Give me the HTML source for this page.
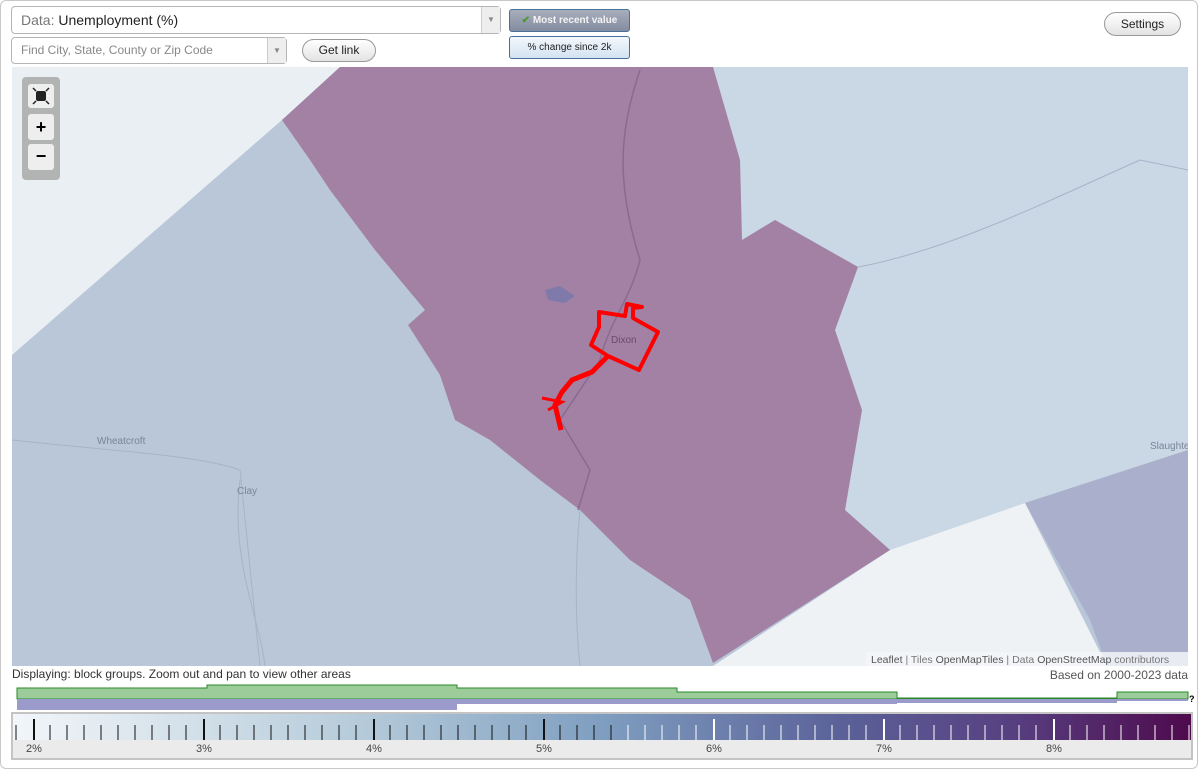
<!DOCTYPE html>
<html><head><meta charset="utf-8"><style>
body{margin:0;width:1200px;height:771px;background:#fff;font-family:"Liberation Sans",sans-serif;position:relative;overflow:hidden}
.frame{position:absolute;left:0;top:0;width:1196px;height:767px;border:1px solid #c8c8c8;border-radius:6px}
.sel{position:absolute;background:#fff;border:1px solid #b5b5b5;border-radius:4px;font-size:14px;color:#222}
.sel .arr{position:absolute;right:0;top:0;bottom:0;width:18px;border-left:1px solid #ccc;background:#eee;color:#888;font-size:8px;text-align:center}
.btn{position:absolute;border:1px solid #999;border-radius:12px;background:linear-gradient(#fff,#e3e3e3);font-size:12px;text-align:center;color:#222}
.tog{position:absolute;border:1px solid #4a6f9c;border-radius:3px;font-size:10px;text-align:center}
</style></head><body>
<div class="frame"></div>
<div class="sel" style="left:11px;top:6px;width:488px;height:26px;line-height:26px"><span style="color:#777;margin-left:9px">Data:</span> Unemployment (%)<div class="arr" style="line-height:26px">▼</div></div>
<div class="sel" style="left:11px;top:37px;width:274px;height:25px;line-height:25px;font-size:12px"><span style="color:#888;margin-left:9px">Find City, State, County or Zip Code</span><div class="arr" style="line-height:25px">▼</div></div>
<div class="btn" style="left:302px;top:39px;width:72px;height:21px;line-height:21px">Get link</div>
<div class="tog" style="left:509px;top:9px;width:119px;height:21px;line-height:21px;background:linear-gradient(#a7aebc,#838ba0);color:#f4f4f4;font-weight:bold"><span style="color:#4a9a2a">✔</span> Most recent value</div>
<div class="tog" style="left:509px;top:36px;width:119px;height:21px;line-height:21px;background:linear-gradient(#f3f8fc,#d3e3f2);color:#222">% change since 2k</div>
<div class="btn" style="left:1104px;top:12px;width:75px;height:22px;line-height:22px">Settings</div>

<svg style="position:absolute;left:12px;top:67px" width="1176" height="599" viewBox="12 67 1176 599">
<rect x="12" y="67" width="1176" height="599" fill="#e9eff2"/>
<polygon points="12,355 282,120 340,67 713,67 1188,67 1188,666 12,666" fill="#b9c7d9"/>
<polygon points="713,67 1188,67 1188,450 1025,503 890,550 845,510 862,410 835,330 858,267 775,220 742,240 740,160" fill="#cad7e5"/>
<polygon points="890,550 1025,503 1107,666 713,666" fill="#eef2f5"/>
<polygon points="1025,503 1188,450 1188,666 1107,666 1090,620" fill="#aab0cc"/>
<polygon points="282,120 340,67 713,67 740,160 742,240 775,220 858,267 835,330 862,410 845,510 890,550 713,663 690,600 630,560 580,510 540,480 490,440 455,420 440,375 408,325 425,310 375,250 330,190 310,160" fill="#a381a4"/>
<g fill="none" stroke="#a8b3c7" stroke-width="1">
<path d="M12,440 C100,450 200,455 240,470 L260,666"/><path d="M240,480 C230,560 260,620 265,666"/>
<path d="M580,510 C575,560 575,620 580,666"/><path d="M858,267 C950,250 1050,200 1140,160 L1188,170"/>
</g>
<path d="M640,70 C620,130 615,180 640,260 C630,300 610,320 600,360 L560,420 L590,470 L578,510" fill="none" stroke="#8a6a8f" stroke-width="1.5"/>
<polygon points="545,290 560,286 575,296 565,303 548,300" fill="#7f7aaa"/>
<text x="611" y="343" font-size="10" fill="#6a4a72" font-family="Liberation Sans">Dixon</text>
<text x="97" y="444" font-size="10" fill="#7a8597" font-family="Liberation Sans">Wheatcroft</text>
<text x="237" y="494" font-size="10" fill="#7a8597" font-family="Liberation Sans">Clay</text>
<text x="1150" y="449" font-size="10" fill="#7a8597" font-family="Liberation Sans">Slaughte</text>
<polygon points="599,312 625,316 627,304 642,307 633,308 633,318 658,332 639,370 608,356 591,345 599,327" fill="none" stroke="#ff0000" stroke-width="4" stroke-linejoin="round"/>
<path d="M608,356 L592,372 L572,380 L562,392 L555,405 L561,430" fill="none" stroke="#ff0000" stroke-width="5"/>
<path d="M542,398 L562,402 L548,410" fill="none" stroke="#ff0000" stroke-width="3"/>
<rect x="866" y="652" width="322" height="14" fill="#f4f6f8" opacity=".85"/>
<text x="871" y="663" font-size="10.5" fill="#777" font-family="Liberation Sans"><tspan fill="#555">Leaflet</tspan> | Tiles <tspan fill="#555">OpenMapTiles</tspan> | Data <tspan fill="#555">OpenStreetMap</tspan> contributors</text>
</svg>
<div style="position:absolute;left:22px;top:77px;width:38px;height:103px;background:#a8a8a8;border-radius:4px;opacity:.85"></div>
<div style="position:absolute;left:28px;top:84px;width:26px;height:24px;background:#eee;border-radius:3px"><svg width="26" height="24"><rect x="8" y="7" width="10" height="10" rx="2" fill="#222"/><path d="M5,4l3,3M21,4l-3,3M5,20l3,-3M21,20l-3,-3" stroke="#222" stroke-width="1.5"/></svg></div>
<div style="position:absolute;left:28px;top:114px;width:26px;height:26px;background:#eee;border-radius:3px;text-align:center;line-height:26px;font-size:18px;font-weight:bold">+</div>
<div style="position:absolute;left:28px;top:144px;width:26px;height:26px;background:#eee;border-radius:3px;text-align:center;line-height:24px;font-size:18px;font-weight:bold">−</div>

<div style="position:absolute;left:12px;top:667px;font-size:12px;color:#333">Displaying: block groups. Zoom out and pan to view other areas</div>
<div style="position:absolute;right:12px;top:668px;font-size:12px;color:#555">Based on 2000-2023 data</div>
<svg style="position:absolute;left:0;top:680px" width="1200" height="32">
<path d="M17,19 V8 H207 V5 H457 V8 H677 V12 H897 V18 H1117 V12 H1188 V19Z" fill="#9ccc99" stroke="#2a8a2a" stroke-width="1"/>
<rect x="17" y="19" width="440" height="11" fill="#9b9bcb"/>
<rect x="457" y="19" width="440" height="5" fill="#9b9bcb"/>
<rect x="897" y="19" width="220" height="4" fill="#9b9bcb"/>
<rect x="1117" y="19" width="71" height="2" fill="#9b9bcb"/>
<text x="1189" y="22" font-size="9" font-weight="bold" font-family="Liberation Sans">?</text>
</svg>
<div style="position:absolute;left:11px;top:712px;width:1178px;height:44px;border:2px solid #c4c4c4;background:#ebebeb">
<svg width="1178" height="44" style="display:block">
<defs><linearGradient id="g"><stop offset="0" stop-color="#f2f6fa"/><stop offset=".3" stop-color="#b4cad9"/><stop offset=".5" stop-color="#7f9ec0"/><stop offset=".7" stop-color="#5b6299"/><stop offset=".85" stop-color="#573f80"/><stop offset="1" stop-color="#4e0a4c"/></linearGradient></defs>
<rect width="1178" height="26" fill="url(#g)"/>
<g stroke="#111" stroke-width="1">
<path d="M3,11V26M37,11V26M54,11V26M71,11V26M88,11V26M105,11V26M122,11V26M139,11V26M156,11V26M173,11V26M207,11V26M224,11V26M241,11V26M258,11V26M275,11V26M292,11V26M309,11V26M326,11V26M343,11V26M377,11V26M394,11V26M411,11V26M428,11V26M445,11V26M462,11V26M479,11V26M496,11V26M513,11V26M547,11V26M564,11V26M581,11V26"/>
<path d="M21,5V26M191,5V26M361,5V26M531,5V26" stroke-width="2"/></g>
<g stroke="#fff" stroke-width="1">
<path d="M615,11V26M632,11V26M649,11V26M666,11V26M683,11V26M717,11V26M734,11V26M751,11V26M768,11V26M785,11V26M802,11V26M819,11V26M836,11V26M853,11V26M887,11V26M904,11V26M921,11V26M938,11V26M955,11V26M972,11V26M989,11V26M1006,11V26M1023,11V26M1057,11V26M1074,11V26M1091,11V26M1108,11V26M1125,11V26M1142,11V26M1159,11V26M1176,11V26"/>
<path d="M701,5V26M871,5V26M1041,5V26" stroke-width="2"/></g>
<path d="M598,11V26" stroke="#111"/>
<g font-size="11" fill="#444" font-family="Liberation Sans" text-anchor="middle">
<text x="21" y="38">2%</text><text x="191" y="38">3%</text><text x="361" y="38">4%</text><text x="531" y="38">5%</text><text x="701" y="38">6%</text><text x="871" y="38">7%</text><text x="1041" y="38">8%</text></g>
</svg></div>
</body></html>
